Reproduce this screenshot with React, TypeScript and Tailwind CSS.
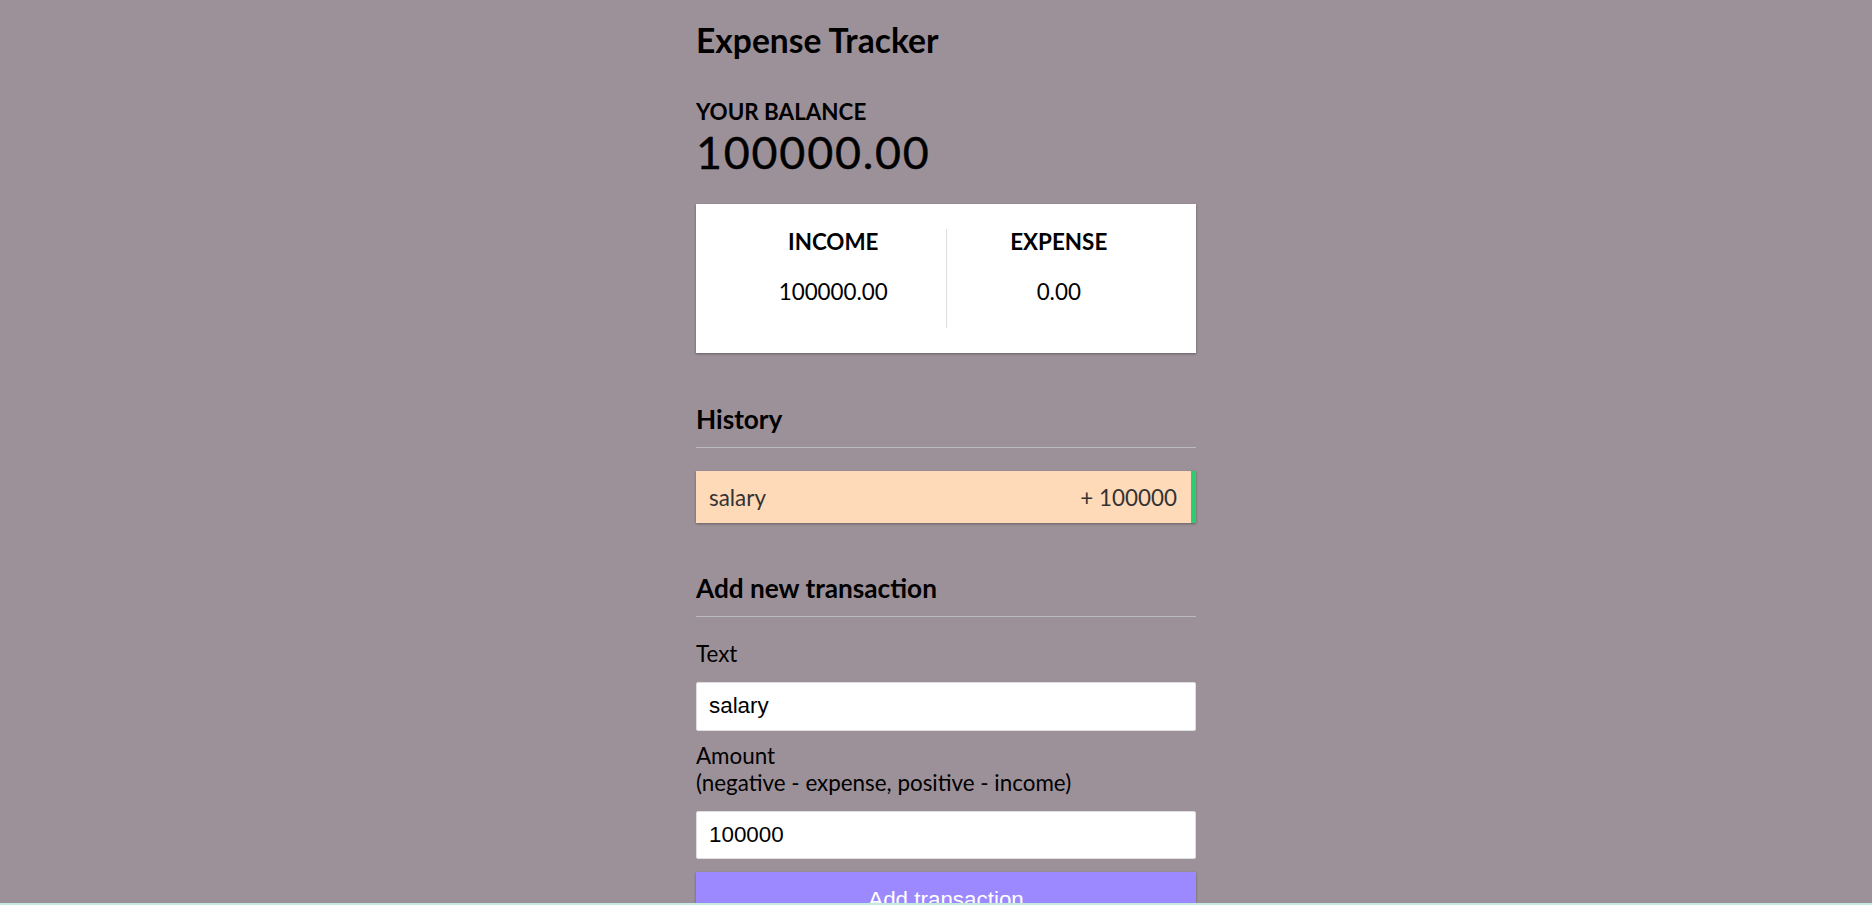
import React from 'react';

const transactions = [{ id: 1, text: 'salary', amount: 100000 }];

export default function App() {
  const total = transactions.reduce((acc, t) => acc + t.amount, 0).toFixed(2);
  const income = transactions
    .filter((t) => t.amount > 0)
    .reduce((acc, t) => acc + t.amount, 0)
    .toFixed(2);
  const expense = Math.abs(
    transactions.filter((t) => t.amount < 0).reduce((acc, t) => acc + t.amount, 0)
  ).toFixed(2);

  return (
    <div className="h-screen overflow-hidden bg-[#9c9199] pl-[20px] flex justify-center font-['Lato',sans-serif] text-black">
      <div className="w-[500px] pt-[20px]">
        <h2 className="text-[33.6px] leading-[1.2] font-bold">Expense Tracker</h2>

        <div className="mt-[38.5px]">
          <h4 className="text-[22.4px] leading-[1.2] font-bold uppercase">Your Balance</h4>
          <h1 className="text-[44.8px] leading-[1.2] font-normal tracking-[1.8px] [-webkit-text-stroke:0.4px_black]">
            {total}
          </h1>
        </div>

        <div className="mt-[25px] bg-white p-[25px] flex shadow-[0_1px_3px_rgba(0,0,0,0.12),0_1px_2px_rgba(0,0,0,0.24)]">
          <div className="flex-1 text-center border-r border-[#dedede]">
            <h4 className="text-[22.4px] leading-[1.2] font-bold uppercase">Income</h4>
            <p className="my-[22.4px] text-[22.4px] leading-[1.2]">{income}</p>
          </div>
          <div className="flex-1 text-center">
            <h4 className="text-[22.4px] leading-[1.2] font-bold uppercase">Expense</h4>
            <p className="my-[22.4px] text-[22.4px] leading-[1.2]">{expense}</p>
          </div>
        </div>

        <h3 className="mt-[51px] text-[26.2px] leading-[1.2] font-bold pb-[12px] border-b border-[#bbb]">
          History
        </h3>
        <ul className="mt-[22.6px]">
          {transactions.map((t) => (
            <li
              key={t.id}
              className="h-[52px] flex items-center justify-between pl-[13px] pr-[14px] bg-[#ffdab9] text-[#333] text-[22.4px] leading-[27px] border-r-[5px] border-[#2ecc71] shadow-[0_1px_3px_rgba(0,0,0,0.12),0_1px_2px_rgba(0,0,0,0.24)]"
            >
              <span>{t.text}</span>
              <span>
                {t.amount < 0 ? '-' : '+'} {Math.abs(t.amount)}
              </span>
            </li>
          ))}
        </ul>

        <h3 className="mt-[49.5px] text-[26.2px] leading-[1.2] font-bold pb-[12px] border-b border-[#bbb]">
          Add new transaction
        </h3>
        <form>
          <div className="mt-[24.5px]">
            <label className="block text-[22.4px] leading-[1.2]">Text</label>
            <input
              type="text"
              defaultValue="salary"
              className="mt-[13.5px] block w-full h-[49px] px-[12px] bg-white border border-[#dedede] rounded-[2px] text-[22.4px] text-black font-['Liberation_Sans',Arial,sans-serif] outline-none"
            />
          </div>
          <div className="mt-[12px]">
            <label className="block text-[22.4px] leading-[1.2]">
              Amount <br />
              (negative - expense, positive - income)
            </label>
            <input
              type="number"
              defaultValue="100000"
              className="mt-[14px] block w-full h-[48.5px] px-[12px] bg-white border border-[#dedede] rounded-[2px] text-[22.4px] text-black font-['Liberation_Sans',Arial,sans-serif] outline-none"
            />
          </div>
          <button
            type="button"
            className="mt-[13px] block w-full py-[11px] bg-[#9c88ff] text-white text-[22.4px] font-['Liberation_Sans',Arial,sans-serif] shadow-[0_1px_3px_rgba(0,0,0,0.12),0_1px_2px_rgba(0,0,0,0.24)]"
          >
            Add transaction
          </button>
        </form>
      </div>
      <div className="fixed bottom-0 left-0 right-0 h-[2px] bg-[#c5ebdf]" />
    </div>
  );
}
